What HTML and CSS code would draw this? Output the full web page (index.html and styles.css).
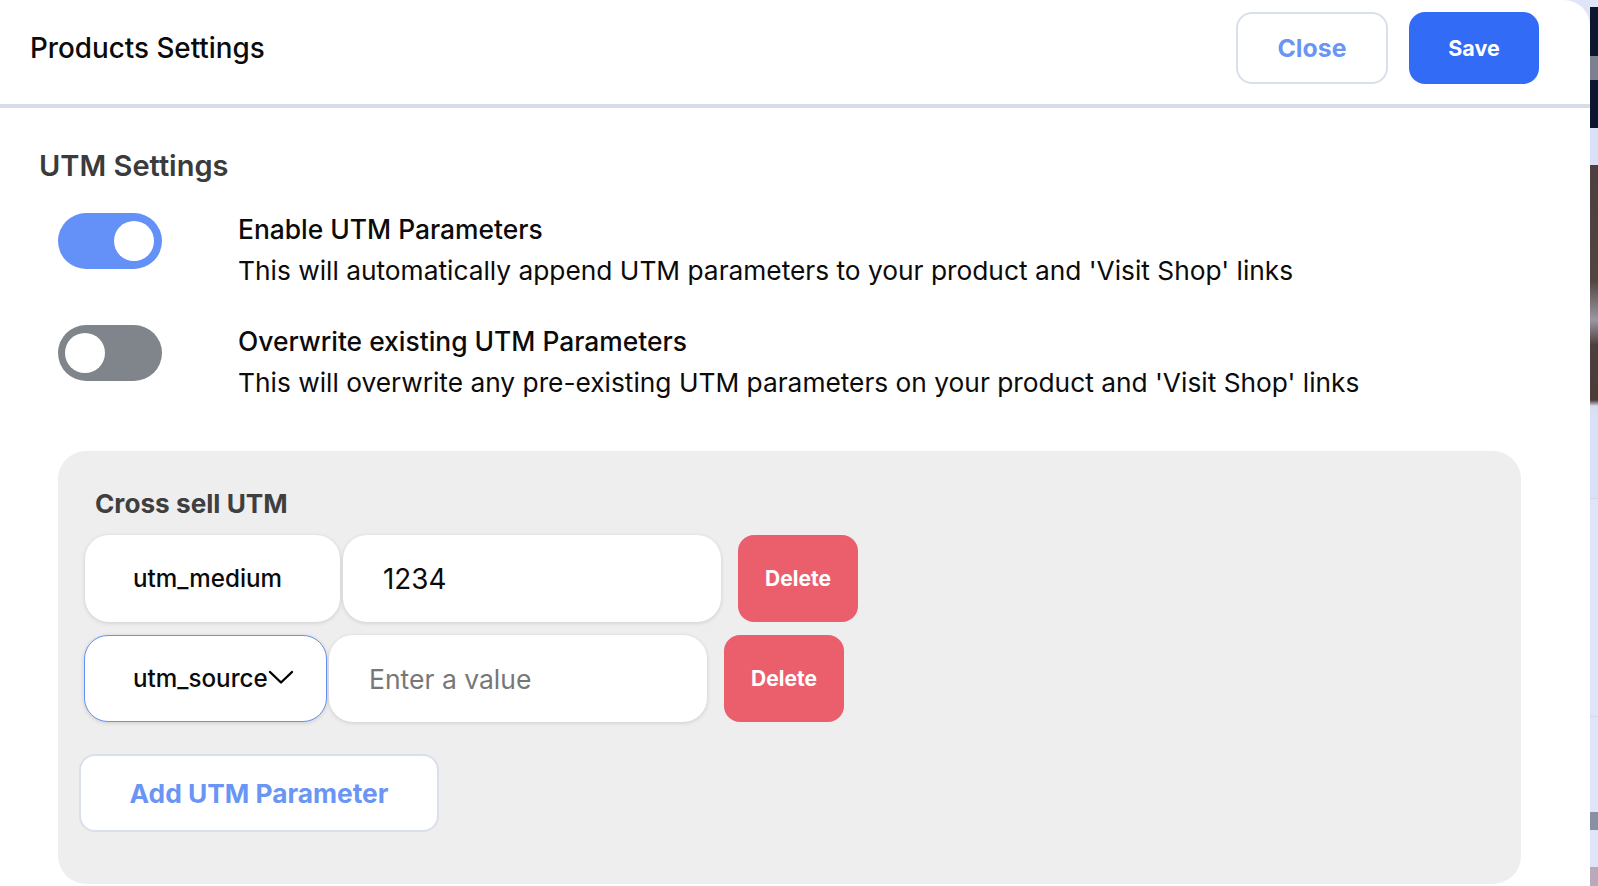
FILE: index.html
```html
<!DOCTYPE html>
<html lang="en">
<head>
<meta charset="utf-8">
<title>Products Settings</title>
<link rel="stylesheet" href="styles.css">
</head>
<body>
<div class="screen">
  <main class="panel">
    <header class="panel-header">
      <h1 class="panel-title">Products Settings</h1>
      <div class="header-actions">
        <button class="btn btn-outline btn-close">Close</button>
        <button class="btn btn-primary btn-save">Save</button>
      </div>
    </header>

    <section class="utm-section">
      <h2 class="section-title">UTM Settings</h2>

      <div class="setting-row">
        <span class="toggle toggle-on"><span class="knob"></span></span>
        <div class="setting-text">
          <div class="setting-label">Enable UTM Parameters</div>
          <div class="setting-desc">This will automatically append UTM parameters to your product and 'Visit Shop' links</div>
        </div>
      </div>

      <div class="setting-row">
        <span class="toggle toggle-off"><span class="knob"></span></span>
        <div class="setting-text">
          <div class="setting-label">Overwrite existing UTM Parameters</div>
          <div class="setting-desc">This will overwrite any pre-existing UTM parameters on your product and 'Visit Shop' links</div>
        </div>
      </div>

      <div class="utm-card">
        <h3 class="card-title">Cross sell UTM</h3>

        <div class="param-row param-row-1">
          <div class="field key-field key-medium">utm_medium</div>
          <div class="field value-field">1234</div>
          <button class="btn-delete">Delete</button>
        </div>

        <div class="param-row param-row-2">
          <div class="field key-field key-source focused">
            <span>utm_source</span>
            <svg class="chevron" width="26" height="15" viewBox="0 0 26 15" aria-hidden="true"><path d="M2 2 L13 12.5 L24 2" fill="none" stroke="#000" stroke-width="2.4" stroke-linecap="round" stroke-linejoin="round"/></svg>
          </div>
          <div class="field value-field placeholder">Enter a value</div>
          <button class="btn-delete">Delete</button>
        </div>

        <button class="btn btn-outline btn-add">Add UTM Parameter</button>
      </div>
    </section>
  </main>
  <aside class="backdrop-strip"></aside>
</div>
</body>
</html>
```

FILE: styles.css
```css
* { box-sizing: border-box; }

html, body {
  margin: 0;
  padding: 0;
  height: 100%;
}

body {
  font-family: Inter, "Noto Sans", "Liberation Sans", sans-serif;
  color: #111;
  background: #dfe4f8;
  overflow: hidden;
}

.screen {
  display: flex;
  width: 1598px;
  height: 886px;
}

.panel {
  width: 1590px;
  height: 886px;
  background: #ffffff;
  border-top-right-radius: 26px;
  display: flex;
  flex-direction: column;
}

.backdrop-strip {
  width: 8px;
  height: 886px;
  background: linear-gradient(to bottom,
    #dfe4f8 0, #dfe4f8 7px,
    #0d1631 7px, #0d1631 56px,
    #7c8090 56px, #7c8090 80px,
    #0d1631 80px, #0d1631 128px,
    #d9e0f8 128px, #d9e0f8 165px,
    #4d3f40 165px, #52443f 280px, #9a98a2 320px, #4d3f3e 345px, #4a3b38 400px, #d9dcef 406px,
    #d9e0f8 415px, #d9e0f8 498px,
    #cfd5ea 498px, #cfd5ea 499px,
    #dfe4fb 499px, #dfe4fb 716px,
    #cfd5ea 716px, #cfd5ea 717px,
    #dfe4fb 717px, #dfe4fb 812px,
    #8a90a4 812px, #8a90a4 830px,
    #dfe4fb 830px, #dfe4fb 867px,
    #b9a9b9 867px, #b9a9b9 886px);
}

/* Header */
.panel-header {
  display: flex;
  align-items: center;
  justify-content: space-between;
  height: 108px;
  padding: 12px 51px 20px 30px;
  border-bottom: 4px solid #d8dce6;
  flex-shrink: 0;
}

.panel-title {
  margin: 0;
  font-size: 27.8px;
  font-weight: 500;
  color: #0b0b0b;
  letter-spacing: 0;
}

.header-actions {
  display: flex;
  gap: 21px;
}

.btn {
  font-family: inherit;
  cursor: pointer;
}

.btn-outline {
  background: #ffffff;
  border: 2px solid #d9dfeb;
  color: #6a95f5;
  font-weight: 700;
}

.btn-close {
  width: 152px;
  height: 72px;
  border-radius: 16px;
  font-size: 24.8px;
}

.btn-primary {
  background: #316bf6;
  border: none;
  color: #ffffff;
  font-weight: 700;
}

.btn-save {
  width: 130px;
  height: 72px;
  border-radius: 16px;
  font-size: 21.5px;
}

/* UTM section */
.utm-section {
  padding: 0 0 0 39px;
}

.section-title {
  margin: 41px 0 0 0;
  font-size: 29px;
  font-weight: 600;
  color: #3b3b3c;
  line-height: 34px;
}

.setting-row {
  display: flex;
  align-items: flex-start;
  gap: 76px;
  margin-left: 19px;
}

.utm-section .setting-row:nth-of-type(1) { margin-top: 30px; }
.utm-section .setting-row:nth-of-type(2) { margin-top: 34px; }

.toggle {
  position: relative;
  display: block;
  width: 104px;
  height: 56px;
  border-radius: 28px;
  flex-shrink: 0;
}

.toggle-on { background: #6491f7; }
.toggle-off { background: #80858b; }

.knob {
  position: absolute;
  top: 8px;
  width: 40px;
  height: 40px;
  border-radius: 50%;
  background: #ffffff;
}

.toggle-on .knob { right: 8px; }
.toggle-off .knob { left: 7px; }

.setting-text {
  margin-top: -4px;
}

.setting-label {
  font-size: 26.4px;
  font-weight: 500;
  line-height: 41px;
  color: #0b0b0b;
}

.setting-desc {
  font-size: 26.3px;
  font-weight: 400;
  line-height: 41px;
  color: #0b0b0b;
}

/* Card */
.utm-card {
  width: 1463px;
  margin: 48px 0 0 19px;
  height: 433px;
  background: #eeeeee;
  border-radius: 28px;
  padding: 36px 21px 0 21px;
}

.card-title {
  margin: 0 0 14px 16px;
  font-size: 26.2px;
  font-weight: 700;
  color: #3f3f3f;
  line-height: 34px;
}

.param-row {
  display: flex;
  align-items: center;
  height: 87px;
  margin-left: 6px;
}

.param-row-2 {
  margin-top: 13px;
  margin-left: 5px;
}

.field {
  height: 87px;
  background: #ffffff;
  border-radius: 24px;
  box-shadow: 0 1px 4px rgba(0, 0, 0, 0.14);
  display: flex;
  align-items: center;
  color: #0b0b0b;
}

.key-field {
  font-size: 24.2px;
  font-weight: 500;
  padding-left: 48px;
}

.key-medium { width: 255px; }

.key-source {
  width: 243px;
  gap: 0;
}

.focused {
  border: 1.5px solid #6491f7;
  padding-left: 48px;
}

.chevron {
  display: block;
  margin-top: -3px;
}

.value-field {
  width: 378px;
  font-size: 27.8px;
  font-weight: 400;
  padding-left: 40px;
}

.param-row-1 .value-field { margin-left: 3px; }
.param-row-2 .value-field { margin-left: 2px; }

.placeholder {
  color: #777777;
  font-size: 26.5px;
}

.btn-delete {
  font-family: inherit;
  width: 120px;
  height: 87px;
  margin-left: 17px;
  border: none;
  border-radius: 16px;
  background: #eb5f6c;
  color: #ffffff;
  font-size: 21px;
  font-weight: 700;
  cursor: pointer;
}

.btn-add {
  margin-top: 32px;
  width: 360px;
  height: 78px;
  border-radius: 16px;
  font-size: 26.3px;
}
```
